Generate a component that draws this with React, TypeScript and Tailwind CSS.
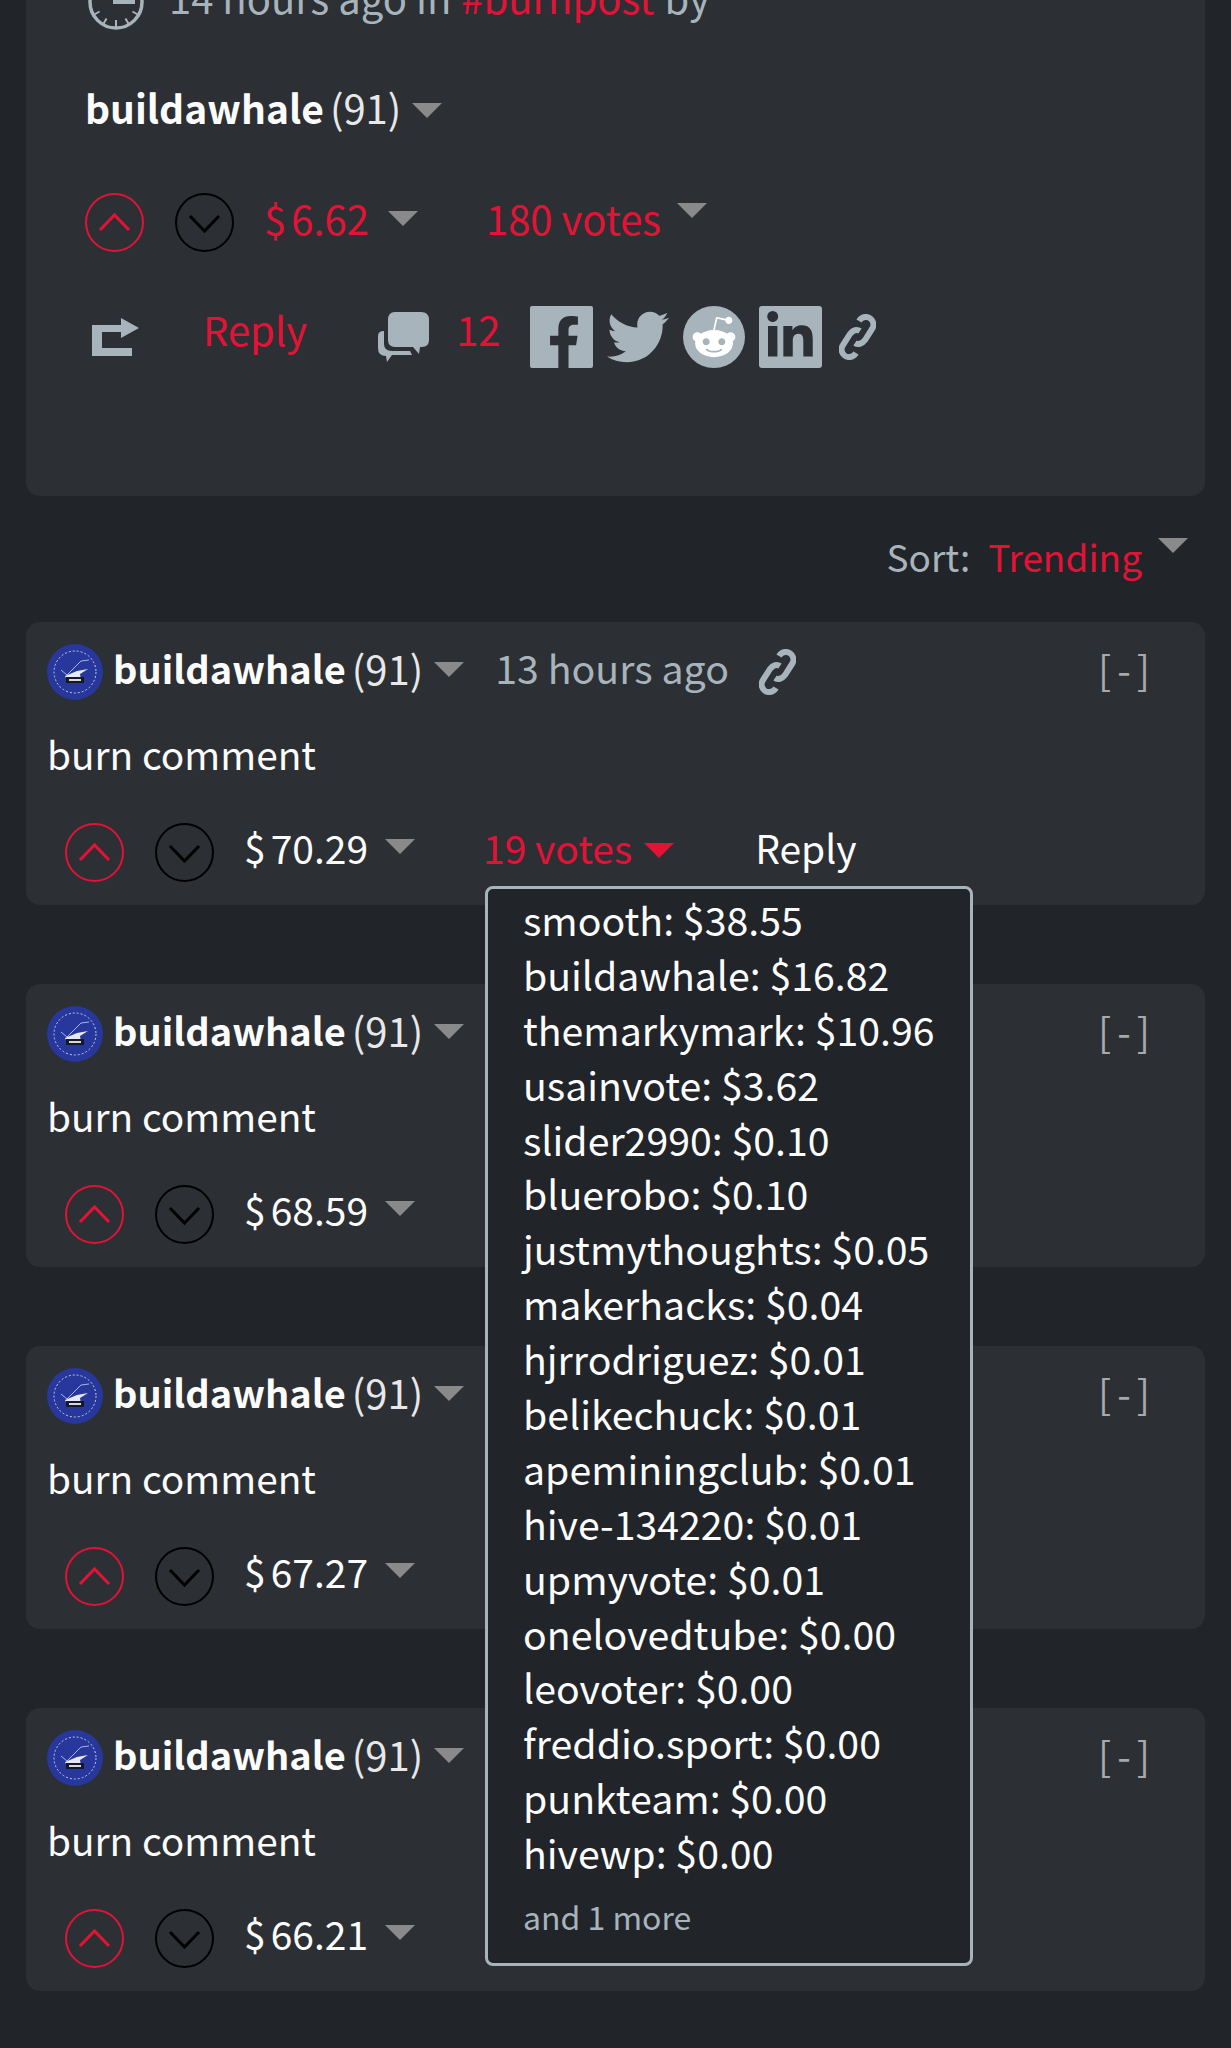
import { FaFacebookF, FaLinkedinIn, FaRedditAlien, FaTwitter } from 'react-icons/fa'

const voters = [
  'smooth: $38.55',
  'buildawhale: $16.82',
  'themarkymark: $10.96',
  'usainvote: $3.62',
  'slider2990: $0.10',
  'bluerobo: $0.10',
  'justmythoughts: $0.05',
  'makerhacks: $0.04',
  'hjrrodriguez: $0.01',
  'belikechuck: $0.01',
  'apeminingclub: $0.01',
  'hive-134220: $0.01',
  'upmyvote: $0.01',
  'onelovedtube: $0.00',
  'leovoter: $0.00',
  'freddio.sport: $0.00',
  'punkteam: $0.00',
  'hivewp: $0.00',
]

const comments = [
  { payout: '70.29', open: true },
  { payout: '68.59', open: false },
  { payout: '67.27', open: false },
  { payout: '66.21', open: false },
]

function Caret({ red }: { red?: boolean }) {
  return (
    <span
      className={`block w-0 h-0 border-x-[15px] border-x-transparent border-t-[15px] ${
        red ? 'border-t-[#e31337]' : 'border-t-[#8a8a8a]'
      }`}
    />
  )
}

function VoteUp() {
  return (
    <svg viewBox="0 0 59 59" className="w-[59px] h-[59px] shrink-0" fill="none">
      <circle cx="29.5" cy="29.5" r="28.5" stroke="#e31337" strokeWidth="2" />
      <path d="M15 37 L29.5 22 L44 37" stroke="#e31337" strokeWidth="3" />
    </svg>
  )
}

function VoteDown() {
  return (
    <svg viewBox="0 0 59 59" className="w-[59px] h-[59px] shrink-0" fill="none">
      <circle cx="29.5" cy="29.5" r="28.5" stroke="#000" strokeWidth="2" />
      <path d="M15 23 L29.5 38 L44 23" stroke="#000" strokeWidth="3" />
    </svg>
  )
}

function ChainIcon({ className }: { className: string }) {
  return (
    <svg viewBox="0 0 37 46" className={className} fill="none" stroke="#a7b4bc" strokeWidth="6">
      <path d="M20 7 C23 2 29 2 32 5 C35 8 35 12 33 15 L26 26 C23 30 19 31 16 29" />
      <path d="M17 39 C14 44 8 44 5 41 C2 38 2 34 4 31 L11 20 C14 16 18 15 21 17" />
    </svg>
  )
}

function Avatar() {
  return (
    <svg viewBox="0 0 56 56" className="w-[56px] h-[56px] shrink-0">
      <circle cx="28" cy="28" r="28" fill="#28379b" />
      <circle cx="28" cy="28" r="21" fill="none" stroke="#c5cceb" strokeWidth="1" strokeDasharray="2 2" />
      <path d="M14 26 L20 31 L34 17 L42 16" fill="none" stroke="#aab4e2" strokeWidth="1" />
      <path d="M18 32 L30 27 L41 25 L33 30 L34 36 H20 Z" fill="#e6e8f2" />
      <rect x="19" y="33" width="18" height="6" fill="#14172e" />
      <rect x="22" y="35" width="12" height="2" fill="#d8d8d8" />
    </svg>
  )
}

function ClockIcon() {
  return (
    <svg viewBox="0 0 58 58" className="w-[58px] h-[58px] shrink-0" fill="none">
      <circle cx="29" cy="29" r="26" stroke="#a7b4bc" strokeWidth="3.5" />
      <path d="M26 15 H48 V31 H26 Z" fill="#a7b4bc" />
      <g stroke="#a7b4bc" strokeWidth="2">
        <path d="M29 54 V47" />
        <path d="M29 54 V48" transform="rotate(30 29 29)" />
        <path d="M29 54 V48" transform="rotate(-30 29 29)" />
        <path d="M29 54 V48" transform="rotate(60 29 29)" />
        <path d="M29 54 V48" transform="rotate(-60 29 29)" />
      </g>
    </svg>
  )
}

function ShareIcon() {
  return (
    <svg viewBox="0 0 47 38" className="w-[47px] h-[38px]" fill="#a7b4bc">
      <path d="M0 7 H29 V0 L47 10 L29 20 V14 H10 V30 H40 V38 H0 Z" />
    </svg>
  )
}

function BubblesIcon() {
  return (
    <svg viewBox="0 0 51 50" className="w-[51px] h-[50px]" fill="#a7b4bc">
      <path d="M17 0 H43 Q51 0 51 8 V28 Q51 35 44 35 H42 L41 42 L35 35 H17 Q10 35 10 28 V8 Q10 0 17 0 Z" />
      <path d="M6 19 V32 Q6 39 14 39 H32 L34 43 H14 L9 50 L8 44 Q0 44 0 36 V24 Q0 19 6 19 Z" />
    </svg>
  )
}

function Comment({ payout, open }: { payout: string; open: boolean }) {
  return (
    <div className="relative h-[283px] rounded-[14px] bg-[#2c2f33] pl-[21px] pr-[55px] pt-[22px]">
      <div className="flex items-center h-[56px]">
        <Avatar />
        <span className="ml-[10px] -mt-[8px] text-[38px] font-bold text-[#fcfcfc]">buildawhale</span>
        <span className="ml-[6px] -mt-[8px] text-[40px] text-[#e8e8e8]">(91)</span>
        <span className="ml-[11px] -mt-[5px]">
          <Caret />
        </span>
        {open && (
          <>
            <span className="ml-[31px] -mt-[10px] text-[39.3px] text-[#a7b4bc]">13 hours ago</span>
            <ChainIcon className="ml-[30px] w-[37px] h-[46px]" />
          </>
        )}
        <span className="ml-auto -mt-[8px] text-[#a7a9ab]">
          [<span className="mx-[6px]">-</span>]
        </span>
      </div>
      <p className="mt-[25px] leading-[56px] text-[38.8px] text-[#fcfcfc]">burn comment</p>
      <div className="flex items-center mt-[42px] pl-[18px] h-[59px]">
        <VoteUp />
        <span className="ml-[31px]">
          <VoteDown />
        </span>
        <span className="ml-[30px] -mt-[12px] text-[#fcfcfc]">
          $<span className="ml-[5px]">{payout}</span>
        </span>
        <span className="ml-[17px] -mt-[12px]">
          <Caret />
        </span>
        {open && (
          <>
            <span className="ml-[68px] -mt-[12px] text-[#e31337]">19 votes</span>
            <span className="ml-[12px] -mt-[4px]">
              <Caret red />
            </span>
            <span className="ml-[81px] -mt-[12px] text-[#fcfcfc]">Reply</span>
          </>
        )}
      </div>
      {open && (
        <div className="absolute z-10 left-[459px] top-[264px] w-[488px] h-[1080px] rounded-[8px] border-[3px] border-[#a7b4bc] bg-[#212428] pl-[35px] pt-[3px] text-[39.25px]">
          {voters.map((v) => (
            <div key={v} className="h-[54.9px] leading-[54.9px] text-[#fcfcfc] whitespace-nowrap">
              {v}
            </div>
          ))}
          <div className="mt-[13px] text-[32px] leading-[46px] text-[#a7b4bc]">and 1 more</div>
        </div>
      )}
    </div>
  )
}

export default function App() {
  return (
    <div className="h-[2048px] overflow-hidden bg-[#212428] px-[26px] text-[39px] leading-[56px] font-['Noto_Sans_CJK_SC',sans-serif]">
      {/* post footer, scrolled partly off the top */}
      <div className="-mt-[29px] h-[525px] rounded-[14px] bg-[#2c2f33] pl-[59px]">
        <div className="flex items-center h-[58px] text-[40px] text-[#a7b4bc]">
          <span className="ml-[2px] mt-[4px]">
            <ClockIcon />
          </span>
          <span className="ml-[24px] -mt-[6px]">14 hours ago in</span>
          <span className="ml-[10px] -mt-[6px] text-[#e31337]">#burnpost</span>
          <span className="ml-[10px] -mt-[6px]">by</span>
        </div>
        <div className="flex items-center mt-[51px] h-[56px]">
          <span className="-mt-[2px] text-[39px] font-bold text-[#fcfcfc]">buildawhale</span>
          <span className="ml-[6px] -mt-[2px] text-[40px] text-[#e8e8e8]">(91)</span>
          <span className="ml-[11px] mt-[4px]">
            <Caret />
          </span>
        </div>
        <div className="flex items-center mt-[57px] h-[59px]">
          <VoteUp />
          <span className="ml-[31px]">
            <VoteDown />
          </span>
          <span className="ml-[30px] -mt-[10px] text-[40px] text-[#e31337]">
            $<span className="ml-[5px]">6.62</span>
          </span>
          <span className="ml-[19px] -mt-[8px]">
            <Caret />
          </span>
          <span className="ml-[68px] -mt-[10px] text-[40px] text-[#e31337]">180 votes</span>
          <span className="ml-[16px] -mt-[24px]">
            <Caret />
          </span>
        </div>
        <div className="flex items-center mt-[54px] h-[62px]">
          <span className="ml-[7px]">
            <ShareIcon />
          </span>
          <span className="ml-[64px] -mt-[16px] text-[40px] text-[#e31337]">Reply</span>
          <span className="ml-[71px]">
            <BubblesIcon />
          </span>
          <span className="ml-[27px] -mt-[16px] text-[40px] text-[#e31337]">12</span>
          <div className="flex items-center gap-[14px] ml-[29px]">
            <span className="flex items-end justify-end w-[63px] h-[62px] rounded-[2px] bg-[#a7b4bc] pr-[3px] overflow-hidden">
              <FaFacebookF className="text-[#2c2f33] text-[52px]" />
            </span>
            <FaTwitter className="text-[#a7b4bc] text-[62px]" />
            <span className="flex items-center justify-center w-[62px] h-[62px] rounded-full bg-[#a7b4bc]">
              <FaRedditAlien className="text-white text-[46px]" />
            </span>
            <span className="flex items-center justify-center w-[63px] h-[62px] rounded-[3px] bg-[#a7b4bc]">
              <FaLinkedinIn className="text-[#2c2f33] text-[52px]" />
            </span>
            <ChainIcon className="ml-[3px] w-[37px] h-[46px]" />
          </div>
        </div>
      </div>

      <div className="flex items-center justify-end h-[126px] pr-[17px]">
        <span className="-mt-[6px] text-[37px] text-[#a7b4bc]">Sort:</span>
        <span className="ml-[18px] -mt-[6px] text-[37px] text-[#e31337]">Trending</span>
        <span className="ml-[16px] -mt-[28px]">
          <Caret />
        </span>
      </div>

      <div className="flex flex-col gap-[79px]">
        {comments.map((c) => (
          <Comment key={c.payout} payout={c.payout} open={c.open} />
        ))}
      </div>
    </div>
  )
}
